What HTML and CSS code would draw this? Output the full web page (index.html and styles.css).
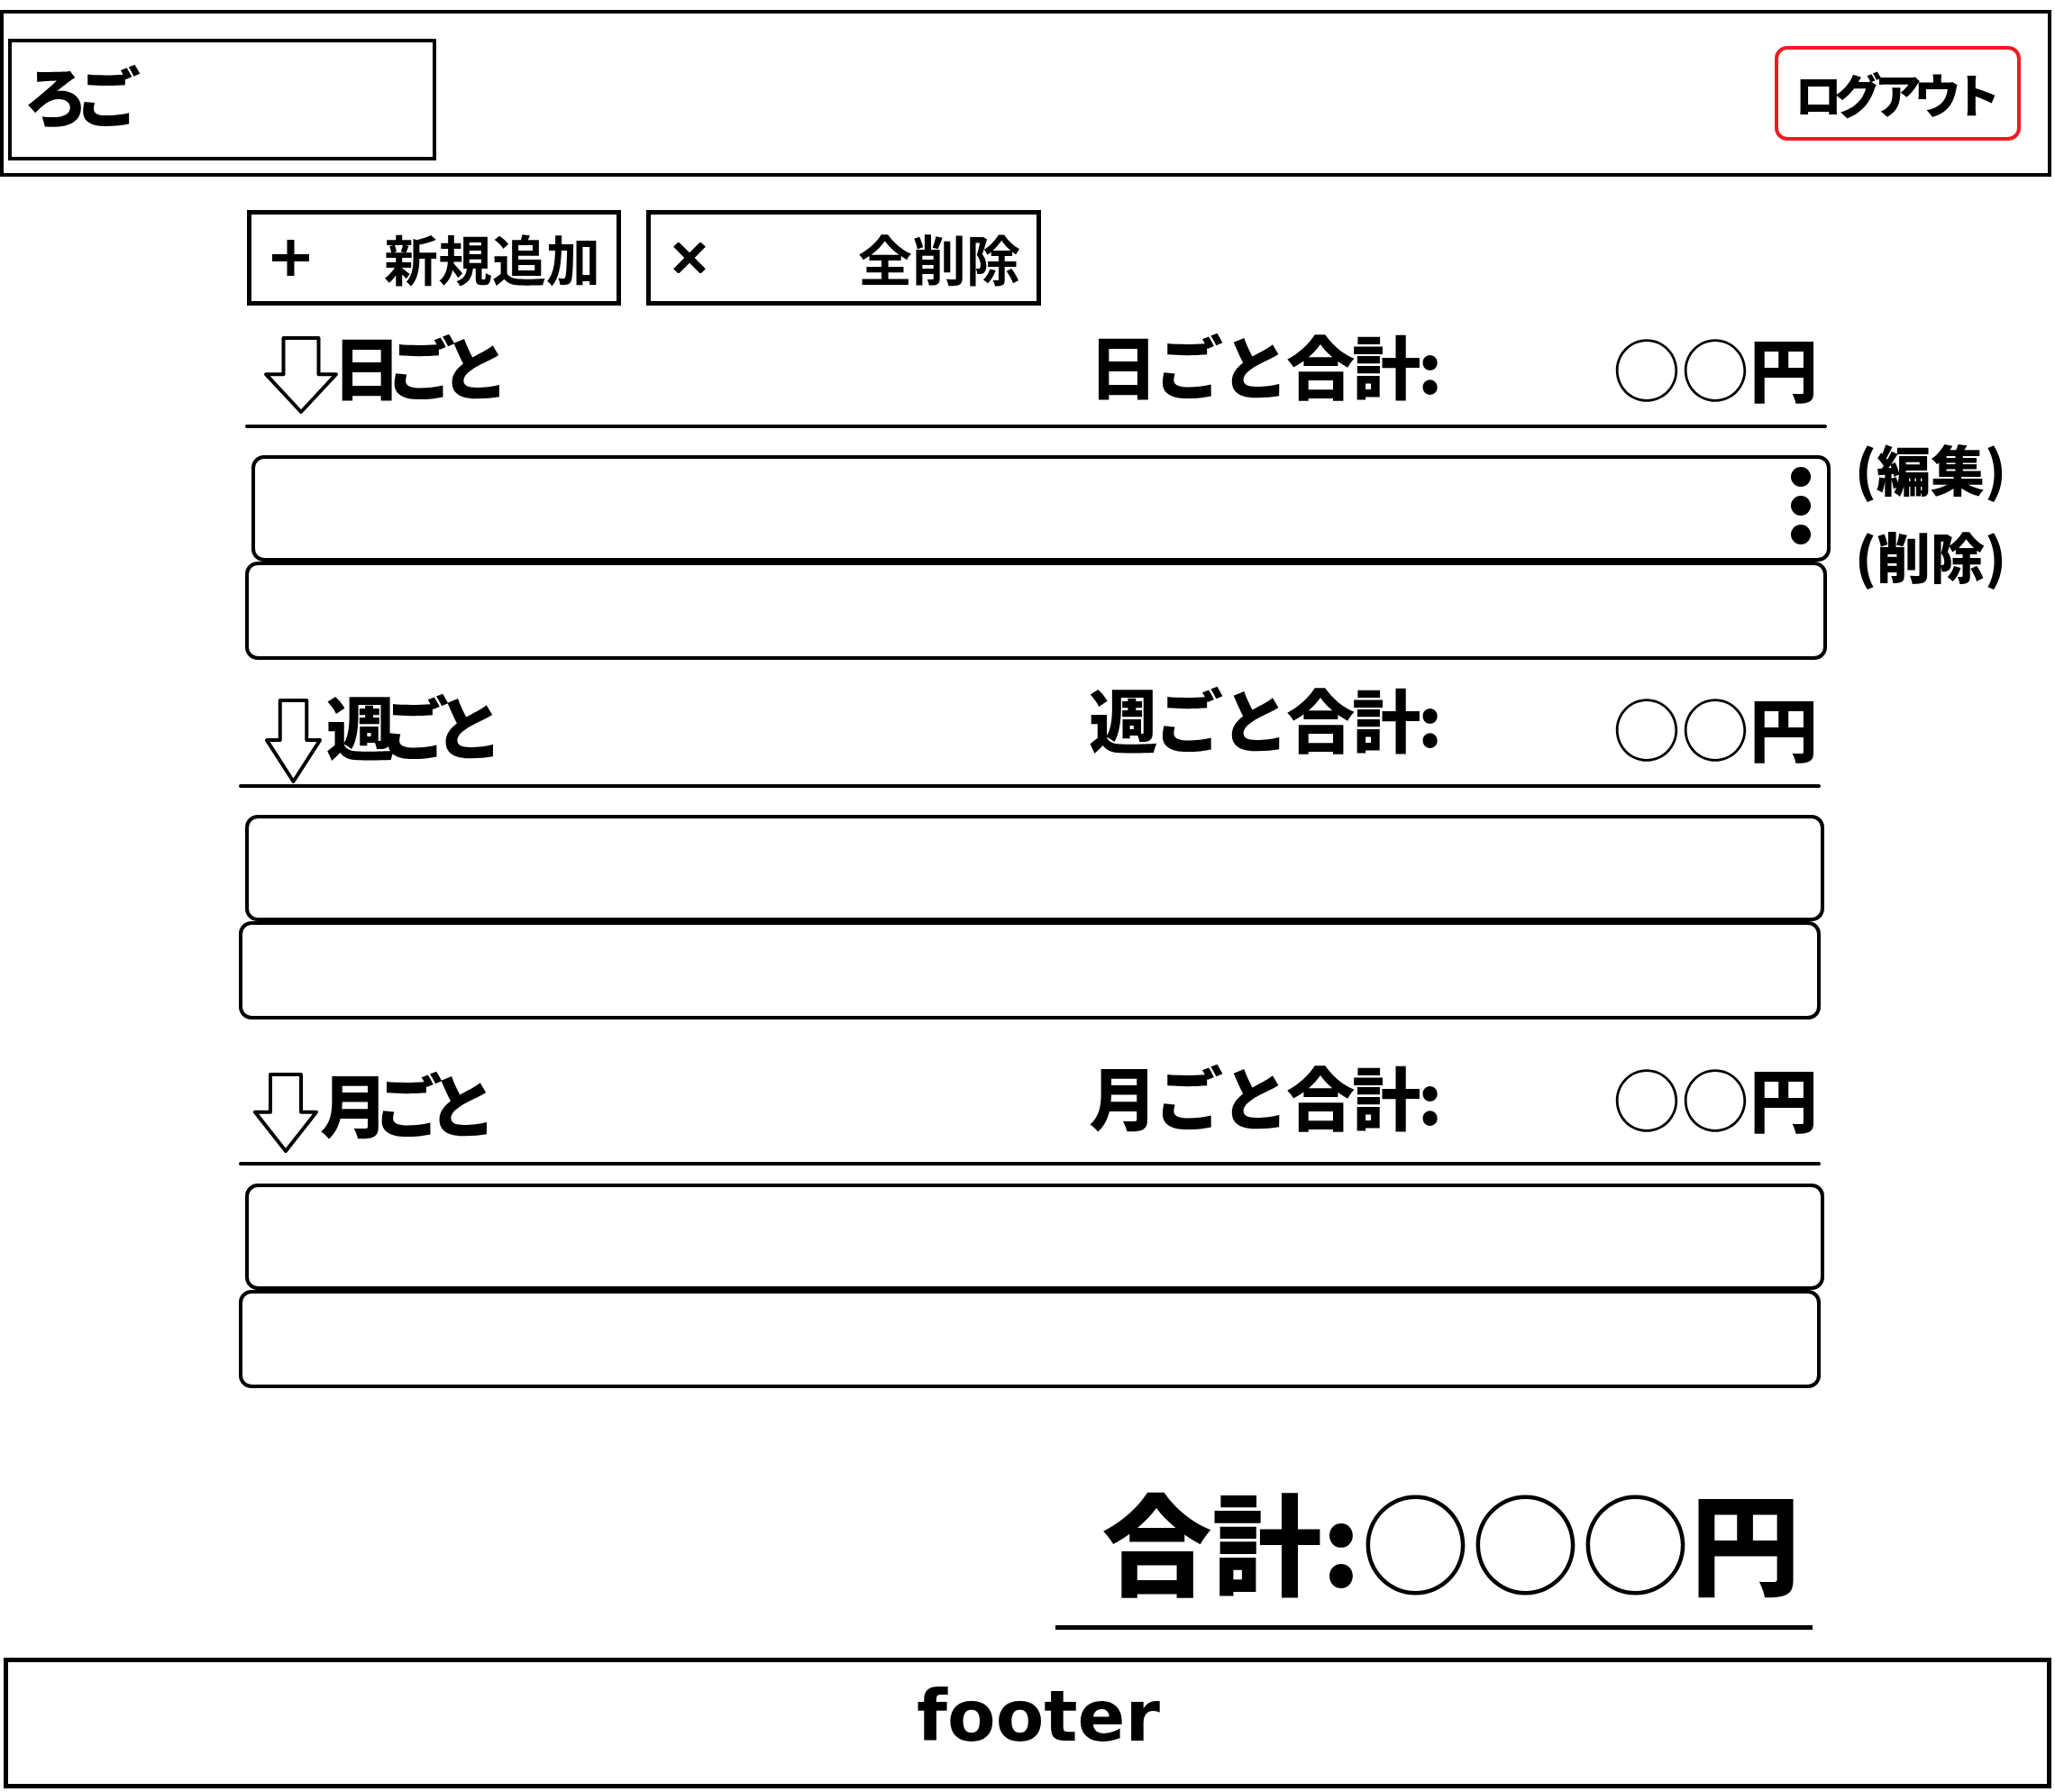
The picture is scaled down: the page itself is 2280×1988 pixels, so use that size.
FILE: index.html
```html
<!DOCTYPE html>
<html lang="ja">
<head>
<meta charset="utf-8">
<title>家計簿</title>
<link rel="stylesheet" href="styles.css">
</head>
<body>
<header class="site-header">
  <div class="logo">ろご</div>
  <button class="logout" type="button">ログアウト</button>
</header>

<main class="main">
  <div class="toolbar">
    <button class="tool-btn tool-btn--add" type="button">
      <svg class="tool-icon" width="41" height="40" viewBox="0 0 41 40"><path d="M20.5 0V40M0 20H41" stroke="#000" stroke-width="8" fill="none"/></svg>
      <span>新規追加</span>
    </button>
    <button class="tool-btn tool-btn--clear" type="button">
      <svg class="tool-icon" width="36" height="34" viewBox="0 0 36 34"><path d="M3 2L33 32M33 2L3 32" stroke="#000" stroke-width="8" fill="none"/></svg>
      <span>全削除</span>
    </button>
  </div>

  <section class="group group--day">
    <div class="group-head">
      <div class="group-title">
        <svg class="arrow" viewBox="0 0 100 100" preserveAspectRatio="none"><path d="M25 0H75V49H100L50 100L0 49H25Z" fill="#fff" stroke="#000" stroke-width="4" stroke-linejoin="round" vector-effect="non-scaling-stroke"/></svg>
        <span class="title-text">日ごと</span>
      </div>
      <div class="group-sum">
        <span class="sum-label">日ごと合計:</span>
        <span class="sum-value"><span class="maru">○○</span>円</span>
      </div>
    </div>
    <div class="rule"></div>
    <div class="items">
      <div class="item item--menu">
        <div class="kebab"><i></i><i></i><i></i></div>
        <ul class="item-menu">
          <li>(編集)</li>
          <li>(削除)</li>
        </ul>
      </div>
      <div class="item item--second"></div>
    </div>
  </section>

  <section class="group group--week">
    <div class="group-head">
      <div class="group-title">
        <svg class="arrow" viewBox="0 0 100 100" preserveAspectRatio="none"><path d="M25 0H75V49H100L50 100L0 49H25Z" fill="#fff" stroke="#000" stroke-width="4" stroke-linejoin="round" vector-effect="non-scaling-stroke"/></svg>
        <span class="title-text">週ごと</span>
      </div>
      <div class="group-sum">
        <span class="sum-label">週ごと合計:</span>
        <span class="sum-value"><span class="maru">○○</span>円</span>
      </div>
    </div>
    <div class="rule"></div>
    <div class="items">
      <div class="item"></div>
      <div class="item item--second"></div>
    </div>
  </section>

  <section class="group group--month">
    <div class="group-head">
      <div class="group-title">
        <svg class="arrow" viewBox="0 0 100 100" preserveAspectRatio="none"><path d="M25 0H75V49H100L50 100L0 49H25Z" fill="#fff" stroke="#000" stroke-width="4" stroke-linejoin="round" vector-effect="non-scaling-stroke"/></svg>
        <span class="title-text">月ごと</span>
      </div>
      <div class="group-sum">
        <span class="sum-label">月ごと合計:</span>
        <span class="sum-value"><span class="maru">○○</span>円</span>
      </div>
    </div>
    <div class="rule"></div>
    <div class="items">
      <div class="item"></div>
      <div class="item item--second"></div>
    </div>
  </section>

  <div class="grand-total">合計:<span class="maru">○○○</span>円</div>
</main>

<footer class="site-footer">footer</footer>
</body>
</html>
```

FILE: styles.css
```css
* {
  box-sizing: border-box;
}

body {
  margin: 0;
  background: #fff;
  color: #000;
  font-family: "Noto Sans CJK JP", sans-serif;
}

/* ---------- header ---------- */
.site-header {
  margin: 11px 4px 0 0;
  height: 185px;
  border: 4px solid #000;
  display: flex;
  justify-content: space-between;
  align-items: flex-start;
  padding: 28px 30px 0 5px;
}

.logo {
  width: 475px;
  height: 135px;
  border: 4px solid #000;
  display: flex;
  align-items: center;
  padding: 0 0 14px 13px;
  font-size: 72px;
  font-weight: 900;
  line-height: 1;
  letter-spacing: -14px;
}

.logout {
  margin-top: 8px;
  width: 273px;
  height: 105px;
  border: 4px solid #ed1c24;
  border-radius: 14px;
  background: #fff;
  color: #000;
  display: flex;
  align-items: center;
  justify-content: center;
  padding: 0 8px 0 0;
  font-family: "Noto Sans CJK JP", sans-serif;
  font-size: 52px;
  font-weight: 900;
  line-height: 1;
  letter-spacing: -8px;
}

/* ---------- main ---------- */
.main {
  margin: 37px 0 0 265px;
  width: 1759px;
}

.toolbar {
  display: flex;
  gap: 28px;
  margin-left: 9px;
}

.tool-btn {
  height: 106px;
  border: 5px solid #000;
  background: #fff;
  color: #000;
  display: flex;
  align-items: center;
  justify-content: space-between;
  padding: 0 18px 0 23px;
  font-family: "Noto Sans CJK JP", sans-serif;
  font-size: 60px;
  font-weight: 700;
  line-height: 1;
}

.tool-btn--add {
  width: 415px;
}

.tool-btn--clear {
  width: 438px;
  padding-left: 25px;
}

.tool-icon {
  display: block;
  flex: none;
}

/* ---------- groups ---------- */
.group--day {
  margin: 32px -7px 0 7px;
}

.group--week {
  margin-top: 38px;
}

.group--month {
  margin-top: 58px;
}

.group-head {
  height: 90px;
  display: flex;
  align-items: flex-start;
  justify-content: space-between;
  padding-right: 7px;
}

.group--day .group-head {
  padding-right: 14px;
}

.group-title {
  display: flex;
  align-items: flex-start;
  font-size: 76px;
  font-weight: 900;
  line-height: 1;
  letter-spacing: -16px;
}

.title-text {
  margin-top: -4px;
}

.arrow {
  display: block;
  flex: none;
  overflow: visible;
  width: 68px;
  height: 85px;
  margin: 3px 4px 0 18px;
}

.group--day .arrow {
  width: 78px;
  height: 82px;
  margin: 4px -4px 0 23px;
}

.group--week .arrow {
  width: 59px;
  height: 90px;
  margin: 7px 7px 0 31px;
}

.group-sum {
  display: flex;
  align-items: flex-start;
  font-size: 76px;
  font-weight: 900;
  line-height: 1;
}

.sum-label {
  letter-spacing: -3px;
  margin: -12px 192px 0 0;
}

.group--day .sum-label {
  margin-top: -5px;
}

.sum-value {
  margin-top: -2px;
}

.group--month .sum-value {
  margin-top: -10px;
}

.maru {
  font-weight: 400;
}

.rule {
  height: 4px;
  margin: 10px 4px 0 0;
  background: #000;
  border-radius: 2px;
}

.items {
  margin-top: 30px;
}

.group--month .items {
  margin-top: 20px;
}

.item {
  height: 118px;
  margin-left: 7px;
  border: 4px solid #000;
  border-radius: 14px;
}

.item--second {
  height: 109px;
  margin: 0 4px 0 0;
}

.item--menu {
  position: relative;
  display: flex;
  justify-content: flex-end;
  align-items: center;
  padding-right: 18px;
}

.kebab {
  display: flex;
  flex-direction: column;
  gap: 10px;
  margin-top: -6px;
}

.kebab i {
  display: block;
  width: 22px;
  height: 22px;
  border-radius: 50%;
  background: #000;
}

.item-menu {
  position: absolute;
  left: calc(100% + 31px);
  top: -39px;
  margin: 0;
  padding: 0;
  list-style: none;
  font-size: 60px;
  font-weight: 900;
  line-height: 97px;
  white-space: nowrap;
}

/* ---------- grand total ---------- */
.grand-total {
  width: 840px;
  margin: 106px 13px 0 auto;
  padding: 0 0 35px 38px;
  border-bottom: 5px solid #000;
  text-align: center;
  font-size: 122px;
  font-weight: 900;
  line-height: 1;
}

/* ---------- footer ---------- */
.site-footer {
  margin: 31px 4px 0 4px;
  height: 145px;
  border: 5px solid #000;
  display: flex;
  align-items: center;
  justify-content: center;
  padding: 0 0 16px 24px;
  font-family: "DejaVu Sans", sans-serif;
  font-size: 78px;
  font-weight: 700;
  line-height: 1;
}
```
